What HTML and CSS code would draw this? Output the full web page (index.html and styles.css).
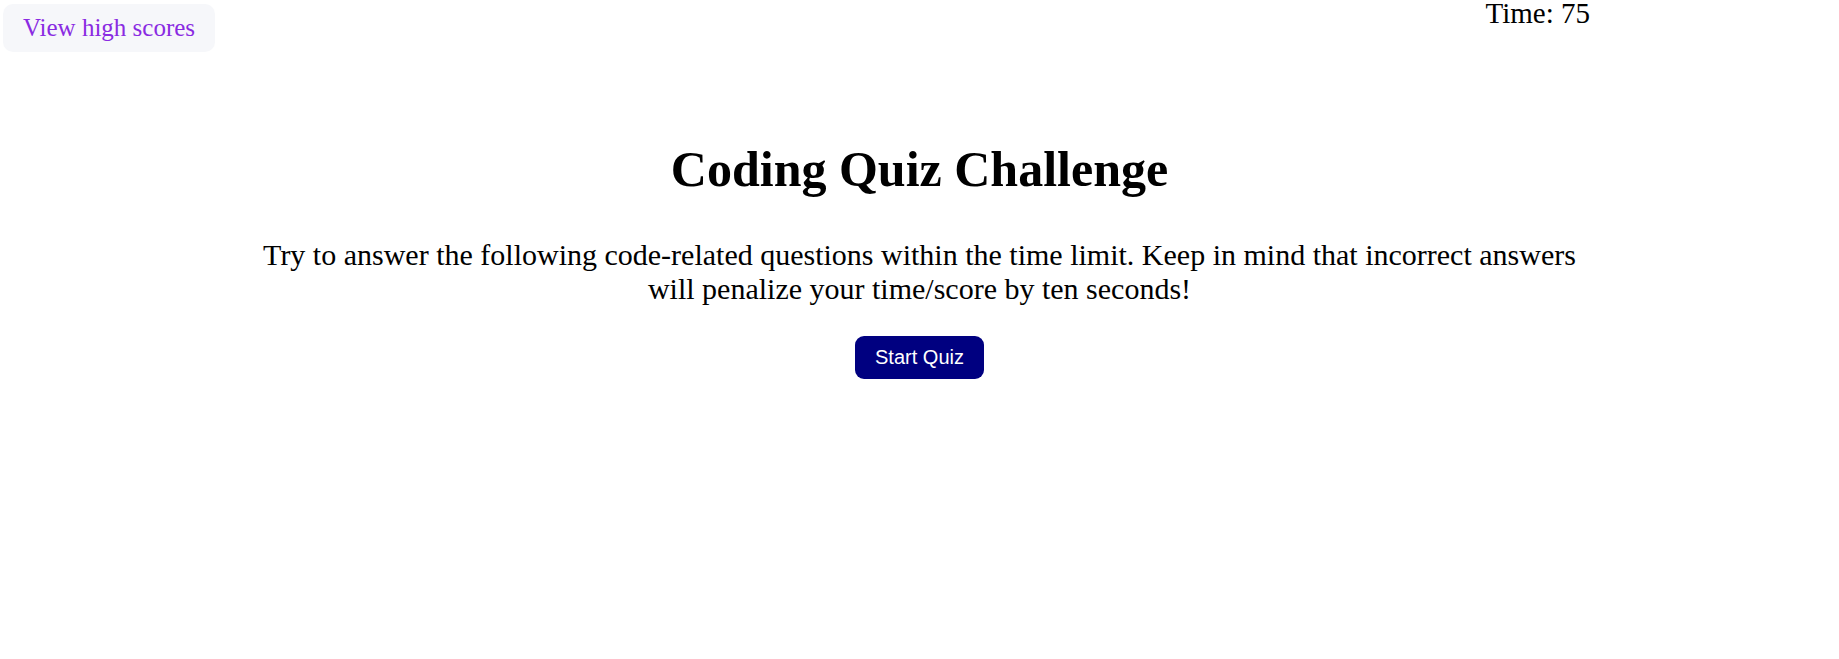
FILE: index.html
```html
<!DOCTYPE html>
<html lang="en">
<head>
<meta charset="utf-8">
<title>Coding Quiz Challenge</title>
<link rel="stylesheet" href="styles.css">
</head>
<body>
<header class="top-bar">
  <button class="high-scores">View high scores</button>
  <div class="timer">Time: 75</div>
</header>
<main class="intro">
  <h1 class="title">Coding Quiz Challenge</h1>
  <p class="description">Try to answer the following code-related questions within the time limit. Keep in mind that incorrect answers will penalize your time/score by ten seconds!</p>
  <button class="start-btn">Start Quiz</button>
</main>
</body>
</html>
```
FILE: styles.css
```css
html, body {
  margin: 0;
  padding: 0;
  background: #ffffff;
  font-family: "Liberation Serif", "Times New Roman", serif;
  color: #000;
}

.top-bar {
  display: flex;
  justify-content: space-between;
  align-items: flex-start;
  padding: 4px 249px 0 3px;
}

.high-scores {
  font-family: "Liberation Serif", "Times New Roman", serif;
  font-size: 25px;
  color: #8a2be2;
  background: #f6f7fa;
  border: none;
  border-radius: 10px;
  padding: 10px 20px;
  cursor: pointer;
}

.timer {
  font-size: 29px;
  margin-top: -7px;
}

.intro {
  display: flex;
  flex-direction: column;
  align-items: center;
  text-align: center;
}

.title {
  font-size: 50px;
  font-weight: bold;
  margin: 88px 0 0;
}

.description {
  font-size: 30px;
  max-width: 1330px;
  margin: 40px 0 0;
}

.start-btn {
  font-family: "Liberation Sans", Arial, sans-serif;
  font-size: 20px;
  color: #ffffff;
  background: #000080;
  border: none;
  border-radius: 9px;
  padding: 10px 20px;
  margin-top: 30px;
  cursor: pointer;
}
```
